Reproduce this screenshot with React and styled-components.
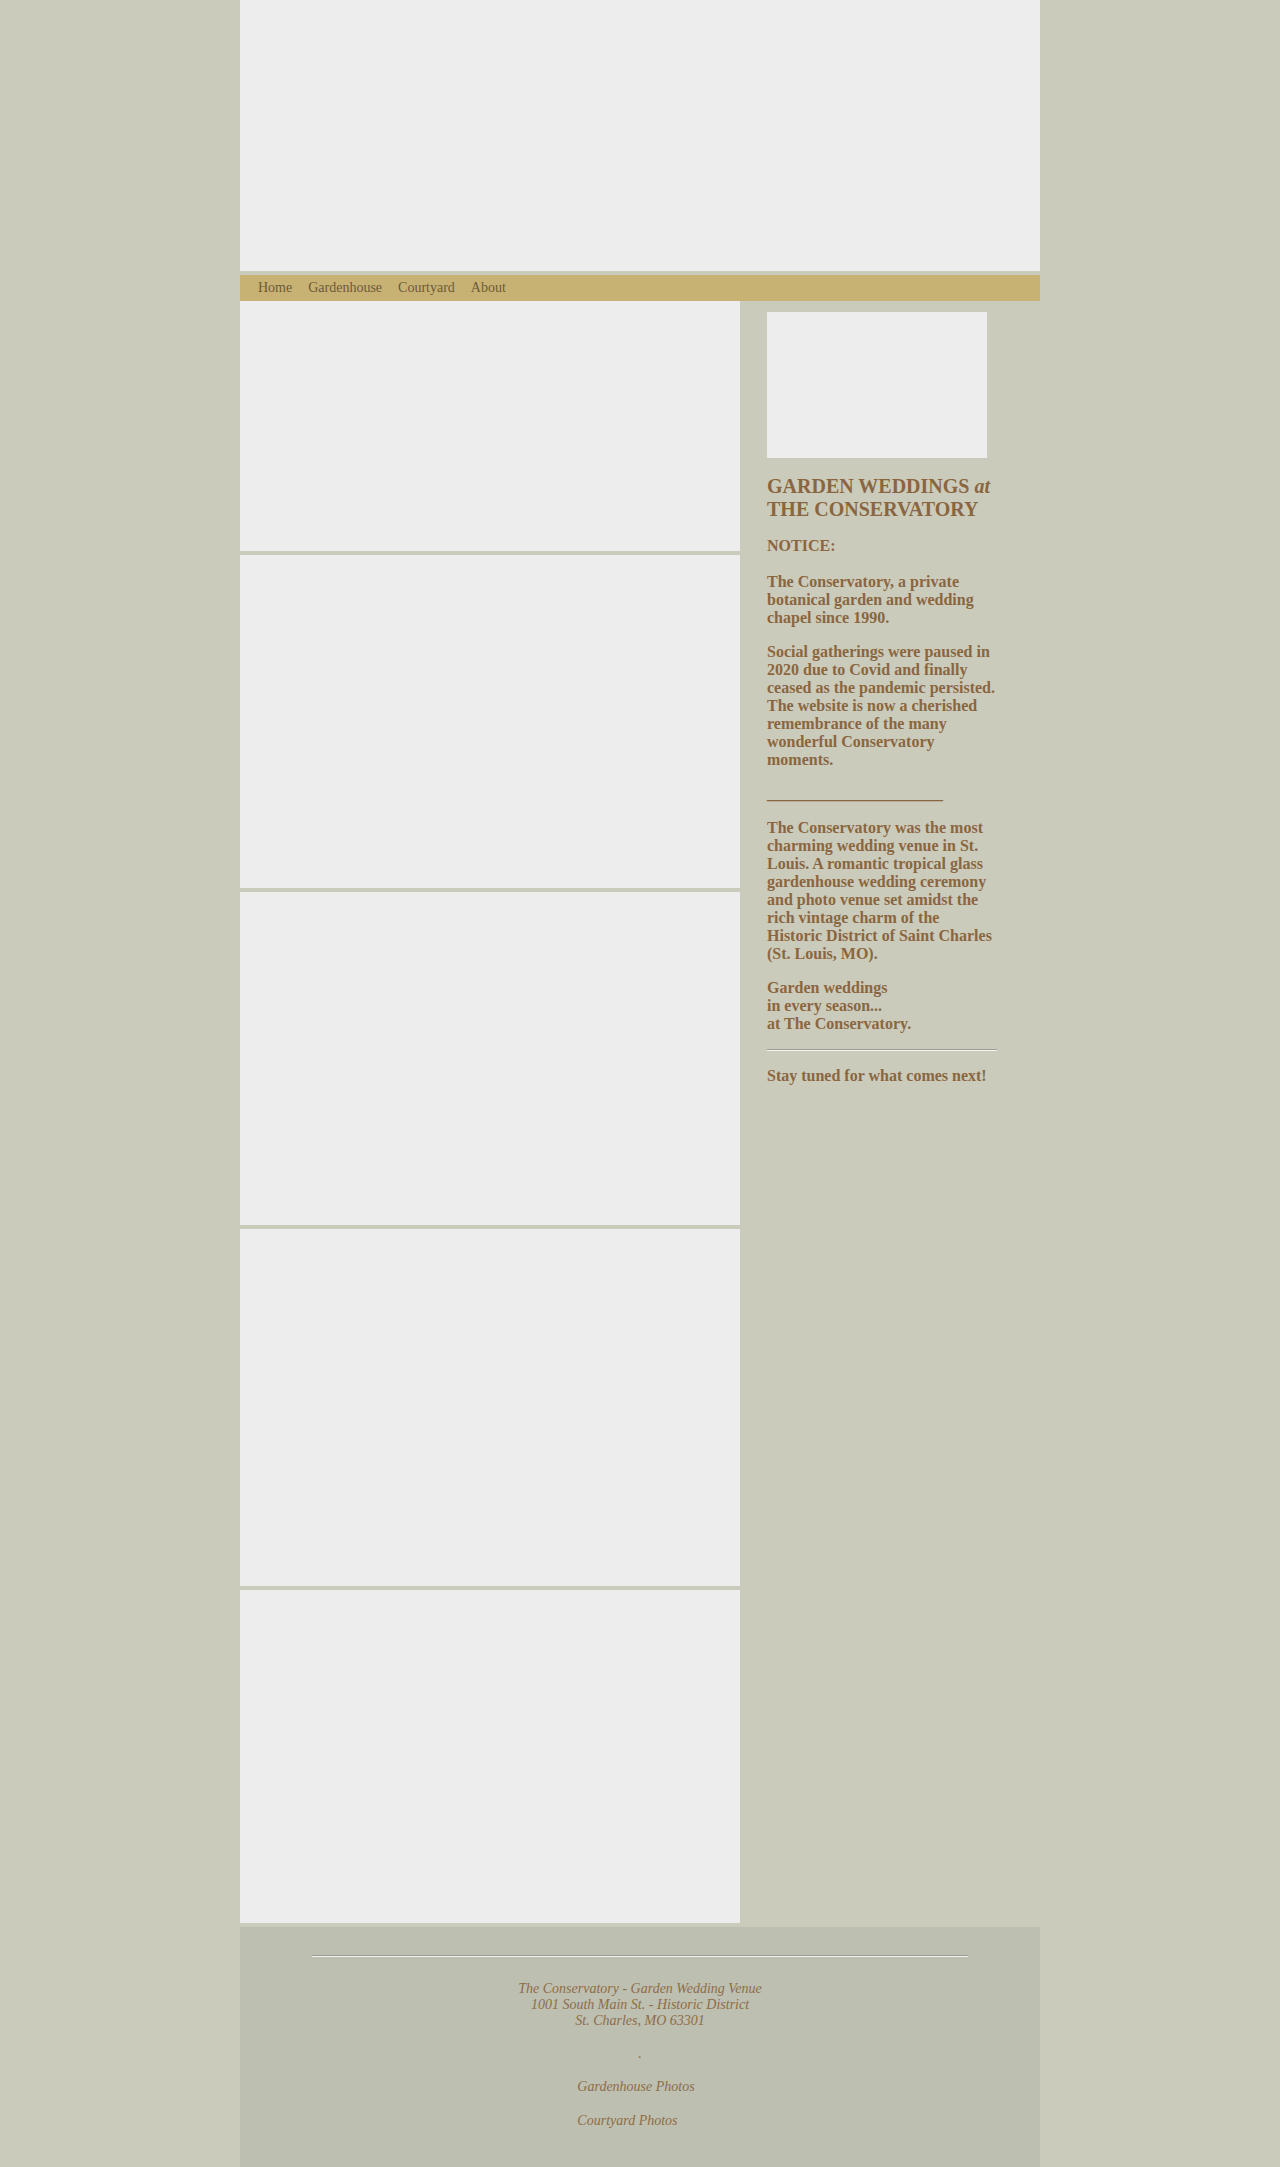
import React from "react"
import styled, { createGlobalStyle } from "styled-components"

const GlobalStyle = createGlobalStyle`
  html, body {
    margin: 0;
    padding: 0;
    background: #cbcbbb;
    font-family: "Liberation Serif", "Times New Roman", serif;
  }
`

const Page = styled.div`
  width: 800px;
  margin: 0 auto;
`

const Header = styled.div`
  height: 271px;
  background: #ededed;
  margin-bottom: 4px;
`

const NavBar = styled.nav`
  display: flex;
  align-items: center;
  gap: 16px;
  height: 26px;
  padding-left: 18px;
  background: #c8b273;
`

const NavLink = styled.a`
  font-size: 14px;
  color: #6b5a3a;
  text-decoration: none;
`

const Main = styled.div`
  display: flex;
`

const PhotoColumn = styled.div`
  width: 500px;
  display: flex;
  flex-direction: column;
  gap: 4px;
`

const Photo = styled.div`
  height: ${(p) => p.h}px;
  background: #ededed;
`

const Sidebar = styled.aside`
  width: 300px;
  box-sizing: border-box;
  padding: 11px 43px 0 27px;
  color: #8a6640;
  font-weight: bold;
  font-size: 16px;
  line-height: 18px;
`

const SideImage = styled.div`
  width: 220px;
  height: 146px;
  background: #ededed;
`

const Title = styled.h2`
  margin: 17px 0 16px;
  font-size: 20px;
  line-height: 23px;
  font-weight: bold;
  white-space: nowrap;
  em {
    font-style: italic;
  }
`

const Para = styled.p`
  margin: 0 0 16px;
`

const Rule = styled.hr`
  margin: 16px 0;
  border: 0;
  border-top: 1px solid #9c9c94;
  border-bottom: 1px solid #f4f4ee;
`

const Footer = styled.footer`
  margin-top: 4px;
  height: 240px;
  box-sizing: border-box;
  padding-top: 28px;
  background: #bdbfb0;
  text-align: center;
  font-style: italic;
  font-size: 14px;
  line-height: 16px;
  color: #8d6d48;
`

const FooterRule = styled.hr`
  width: 656px;
  margin: 0 auto 24px;
  border: 0;
  border-top: 1px solid #9a9a9a;
  border-bottom: 1px solid #f4f4ee;
`

const FooterText = styled.p`
  margin: 0 0 17px;
`

const LinkStack = styled.div`
  display: inline-flex;
  flex-direction: column;
  align-items: flex-start;
  gap: 18px;
  margin-right: 8px;
`

const FooterLink = styled.a`
  color: #8d6d48;
  text-decoration: none;
`

const photoHeights = [250, 333, 333, 357, 333]

export default function App() {
  return (
    <>
      <GlobalStyle />
      <Page>
        <Header />
        <NavBar>
          <NavLink href="#">Home</NavLink>
          <NavLink href="#">Gardenhouse</NavLink>
          <NavLink href="#">Courtyard</NavLink>
          <NavLink href="#">About</NavLink>
        </NavBar>
        <Main>
          <PhotoColumn>
            {photoHeights.map((h, i) => (
              <Photo key={i} h={h} />
            ))}
          </PhotoColumn>
          <Sidebar>
            <SideImage />
            <Title>
              GARDEN WEDDINGS <em>at</em>
              <br />
              THE CONSERVATORY
            </Title>
            <Para>
              NOTICE:
              <br />
              <br />
              The Conservatory, a private botanical garden and wedding chapel
              since 1990.
            </Para>
            <Para>
              Social gatherings were paused in 2020 due to Covid and finally
              ceased as the pandemic persisted. The website is now a cherished
              remembrance of the many wonderful Conservatory moments.
            </Para>
            <Para>______________________</Para>
            <Para>
              The Conservatory was the most charming wedding venue in St.
              Louis. A romantic tropical glass gardenhouse wedding ceremony and
              photo venue set amidst the rich vintage charm of the Historic
              District of Saint Charles (St. Louis, MO).
            </Para>
            <Para>
              Garden weddings
              <br />
              in every season...
              <br />
              at The Conservatory.
            </Para>
            <Rule />
            <Para>Stay tuned for what comes next!</Para>
          </Sidebar>
        </Main>
        <Footer>
          <FooterRule />
          <FooterText>
            The Conservatory - Garden Wedding Venue
            <br />
            1001 South Main St. - Historic District
            <br />
            St. Charles, MO 63301
          </FooterText>
          <FooterText>.</FooterText>
          <LinkStack>
            <FooterLink href="#">Gardenhouse Photos</FooterLink>
            <FooterLink href="#">Courtyard Photos</FooterLink>
          </LinkStack>
        </Footer>
      </Page>
    </>
  )
}
